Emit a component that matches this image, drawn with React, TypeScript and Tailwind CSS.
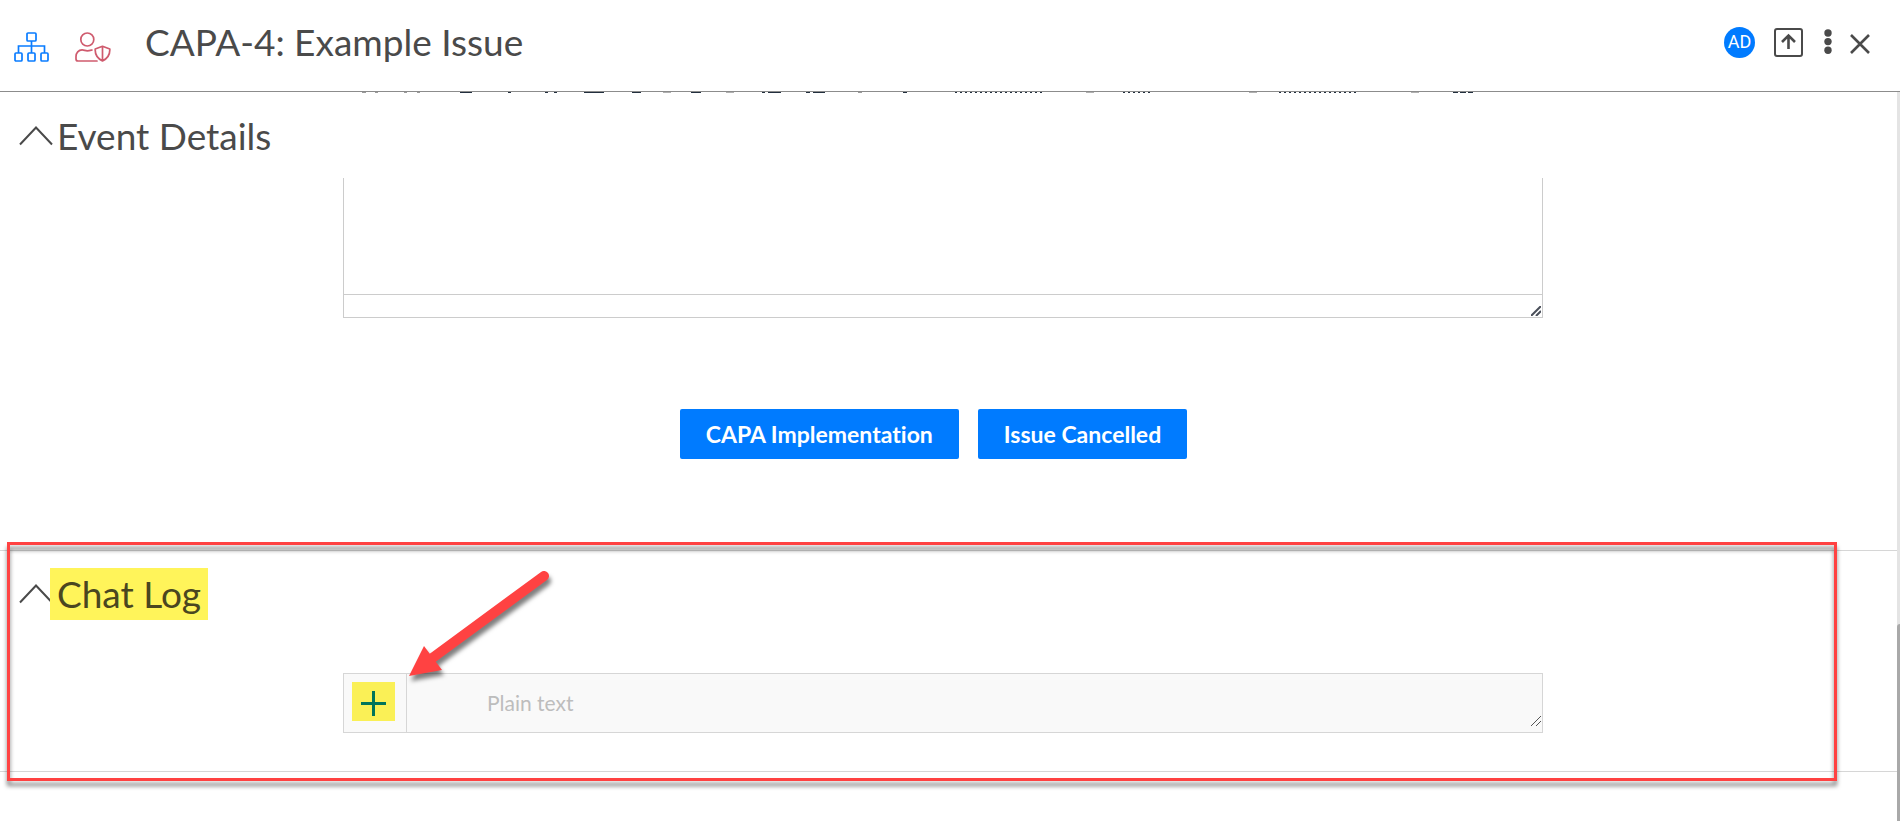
import React from 'react';

const toolbarEdge: [number, number, string][] = [
  [19, 4, '#9a9a9a'], [32, 3, '#9a9a9a'], [61, 3, '#9a9a9a'], [74, 3, '#9a9a9a'],
  [117, 12, '#222f3e'], [165, 3, '#222f3e'], [202, 3, '#222f3e'], [211, 3, '#222f3e'],
  [241, 20, '#222f3e'], [289, 9, '#222f3e'], [320, 8, '#b0b0b0'], [348, 10, '#222f3e'],
  [383, 8, '#b0b0b0'], [419, 3, '#222f3e'], [425, 13, '#222f3e'], [463, 4, '#222f3e'],
  [470, 12, '#222f3e'], [515, 4, '#9a9a9a'], [560, 4, '#222f3e'], [743, 8, '#b0b0b0'],
  [906, 8, '#b0b0b0'], [1068, 8, '#b0b0b0'], [1110, 5, '#222f3e'], [1117, 6, '#222f3e'], [1125, 5, '#222f3e'],
];

function SitemapIcon() {
  return (
    <svg width="35" height="30" viewBox="0 0 35 30" fill="none" stroke="#0a7cff" strokeWidth="1.7">
      <rect x="13" y="1" width="9" height="8" rx="1" />
      <rect x="1" y="21" width="7" height="8" rx="1" />
      <rect x="14" y="21" width="7" height="8" rx="1" />
      <rect x="27" y="21" width="7" height="8" rx="1" />
      <path d="M17.500 9v12M4.500 21v-7h26v7" />
    </svg>
  );
}

function UserShieldIcon() {
  return (
    <svg width="36" height="30" viewBox="0 0 36 30" fill="none" stroke="#cf5b6e" strokeWidth="1.7" strokeLinecap="round" strokeLinejoin="round">
      <circle cx="12.3" cy="7.500" r="6.500" />
      <path d="M17 18c-2 .5-3 .8-4.700.8-2.300 0-3-.9-5.200-.9C3.500 17.900 1 21 1 24.500v2.500c0 1 .8 2 2 2h19" />
      <path d="M27.500 14.300l7.300 2.700c.3 5.500-2.300 9.500-7.300 11.900-5-2.400-7.600-6.400-7.300-11.900zM27.500 14.300v14.600" />
    </svg>
  );
}

function Chevron() {
  return (
    <svg width="34" height="20" viewBox="0 0 34 20" fill="none" stroke="#4a4a4a" strokeWidth="2">
      <path d="M1 18.500L17 1.500 33 18.500" />
    </svg>
  );
}

function Grip({ className }: { className: string }) {
  return (
    <svg className={className} width="10" height="10" viewBox="0 0 10 10" fill="none" stroke="currentColor">
      <path d="M0 10L10 0M5 10L10 5" />
    </svg>
  );
}

function Header() {
  return (
    <header className="flex h-[92px] items-start border-b border-[#8c8c8c] pr-[30px] pl-3.5">
      <a href="#hierarchy" aria-label="Hierarchy" className="mt-8">
        <SitemapIcon />
      </a>
      <a href="#access" aria-label="Access" className="mt-8 ml-[26px]">
        <UserShieldIcon />
      </a>
      <h1 className="mt-[18px] ml-[34px] flex-1 text-[37px] leading-[48px]">CAPA-4: Example Issue</h1>
      <div className="mt-[26px] flex h-8 items-center">
        <span className="flex size-[31px] items-center justify-center rounded-full bg-[#007bff] font-[Roboto,sans-serif] text-lg text-white">
          AD
        </span>
        <button aria-label="Open" className="ml-[19px]">
          <svg width="29" height="29" viewBox="0 0 29 29" fill="none" stroke="#4a4a4a" strokeWidth="2">
            <rect x="1" y="1" width="27" height="27" rx="2" />
            <path d="M14.500 21V7.500M8 14l6.500-6.500L21 14" strokeWidth="2.600" />
          </svg>
        </button>
        <button aria-label="More" className="ml-[21px]">
          <svg width="8" height="26" viewBox="0 0 8 26" fill="#4a4a4a">
            <circle cx="4" cy="4" r="3.700" />
            <circle cx="4" cy="12.600" r="3.700" />
            <circle cx="4" cy="21.200" r="3.700" />
          </svg>
        </button>
        <button aria-label="Close" className="mt-1 ml-[18px]">
          <svg width="20" height="20" viewBox="0 0 20 20" fill="none" stroke="#4a4a4a" strokeWidth="2.600">
            <path d="M1 1l18 18M19 1L1 19" />
          </svg>
        </button>
      </div>
    </header>
  );
}

function ActionButton({ children }: { children: React.ReactNode }) {
  return (
    <button className="h-[50px] rounded-xs bg-[#007bff] px-[26px] text-[23px] font-bold text-white">
      {children}
    </button>
  );
}

function EventDetails() {
  return (
    <section className="h-[458px] pr-[11px]">
      <svg className="mx-auto block w-[1200px]" height="1" viewBox="0 0 1200 1" shapeRendering="crispEdges">
        {toolbarEdge.map(([x, w, color]) => (
          <rect key={x} x={x} width={w} height="1" fill={color} />
        ))}
        <path d="M612 .5h90M780 .5h28M936 .5h78" stroke="#222f3e" strokeDasharray="2 3" />
      </svg>
      <button className="flex h-[85px] items-center pl-[19px]">
        <Chevron />
        <span className="ml-1 text-[37px] leading-[52px]">Event Details</span>
      </button>
      <div className="relative mx-auto w-[1200px] border border-t-0 border-[#ccc]">
        <textarea aria-label="Event details" className="block h-[116px] w-full resize-none outline-none" />
        <div className="h-[23px] border-t border-[#ccc]" />
        <Grip className="absolute right-px bottom-px stroke-2 text-[#4a4f5a]" />
      </div>
      <div className="mt-[91px] flex justify-center gap-[19px] pr-[19px]">
        <ActionButton>CAPA Implementation</ActionButton>
        <ActionButton>Issue Cancelled</ActionButton>
      </div>
    </section>
  );
}

function ChatLog() {
  return (
    <section className="h-[222px] border-y border-[#d6d6d6] pr-[11px]">
      <button className="mt-[17px] flex h-[52px] items-center pl-[19px]">
        <Chevron />
        <span className="-ml-[3px] flex h-full items-center bg-[#fff45a] px-[7px] text-[37px] text-[#4a4620]">Chat Log</span>
      </button>
      <div className="relative mx-auto mt-[53px] flex h-[60px] w-[1200px] border border-[#d6d6d6] bg-[#f9f9f9]">
        <div className="w-[63px] border-r border-[#d6d6d6] pt-2 pl-2">
          <button aria-label="Add message" className="flex h-[39px] w-[43px] items-center justify-center bg-[#faf056] pt-1">
            <svg width="25" height="25" viewBox="0 0 25 25" stroke="#00755a" strokeWidth="3">
              <path d="M12.500 0v25M0 12.500h25" />
            </svg>
          </button>
        </div>
        <input
          aria-label="Chat message"
          placeholder="Plain text"
          className="flex-1 pl-20 text-[21px] outline-none placeholder:text-[#bdbdbd]"
        />
        <Grip className="absolute right-px bottom-1.5 text-[#555]" />
      </div>
    </section>
  );
}

function Annotations() {
  return (
    <div className="pointer-events-none absolute inset-0">
      <div className="absolute top-[542px] right-[63px] left-[7px] h-[239px] border-[3px] border-[#ff4242] drop-shadow-[0_5px_2px_rgba(0,0,0,0.5)]" />
      <svg className="absolute top-[565px] left-[400px] drop-shadow-[2px_5px_2px_rgba(0,0,0,0.5)]" width="160" height="120" viewBox="0 0 160 120">
        <path d="M144 11L31 94" stroke="#ff4242" strokeWidth="10" strokeLinecap="round" />
        <path d="M9 111L24 81L42 105Z" fill="#ff4242" />
      </svg>
    </div>
  );
}

export default function App() {
  return (
    <div className="relative flex min-h-screen flex-col overflow-hidden bg-white font-[Lato,sans-serif] text-[#4a4a4a] [font-variant-ligatures:none]">
      <Header />
      <div className="flex flex-1">
        <main className="flex-1">
          <EventDetails />
          <ChatLog />
        </main>
        <div className="flex w-[3px] flex-col bg-[#e4e4e4] pt-[532px]">
          <div className="flex-1 rounded-tl-sm bg-[#a9a9a9]" />
        </div>
      </div>
      <Annotations />
    </div>
  );
}
